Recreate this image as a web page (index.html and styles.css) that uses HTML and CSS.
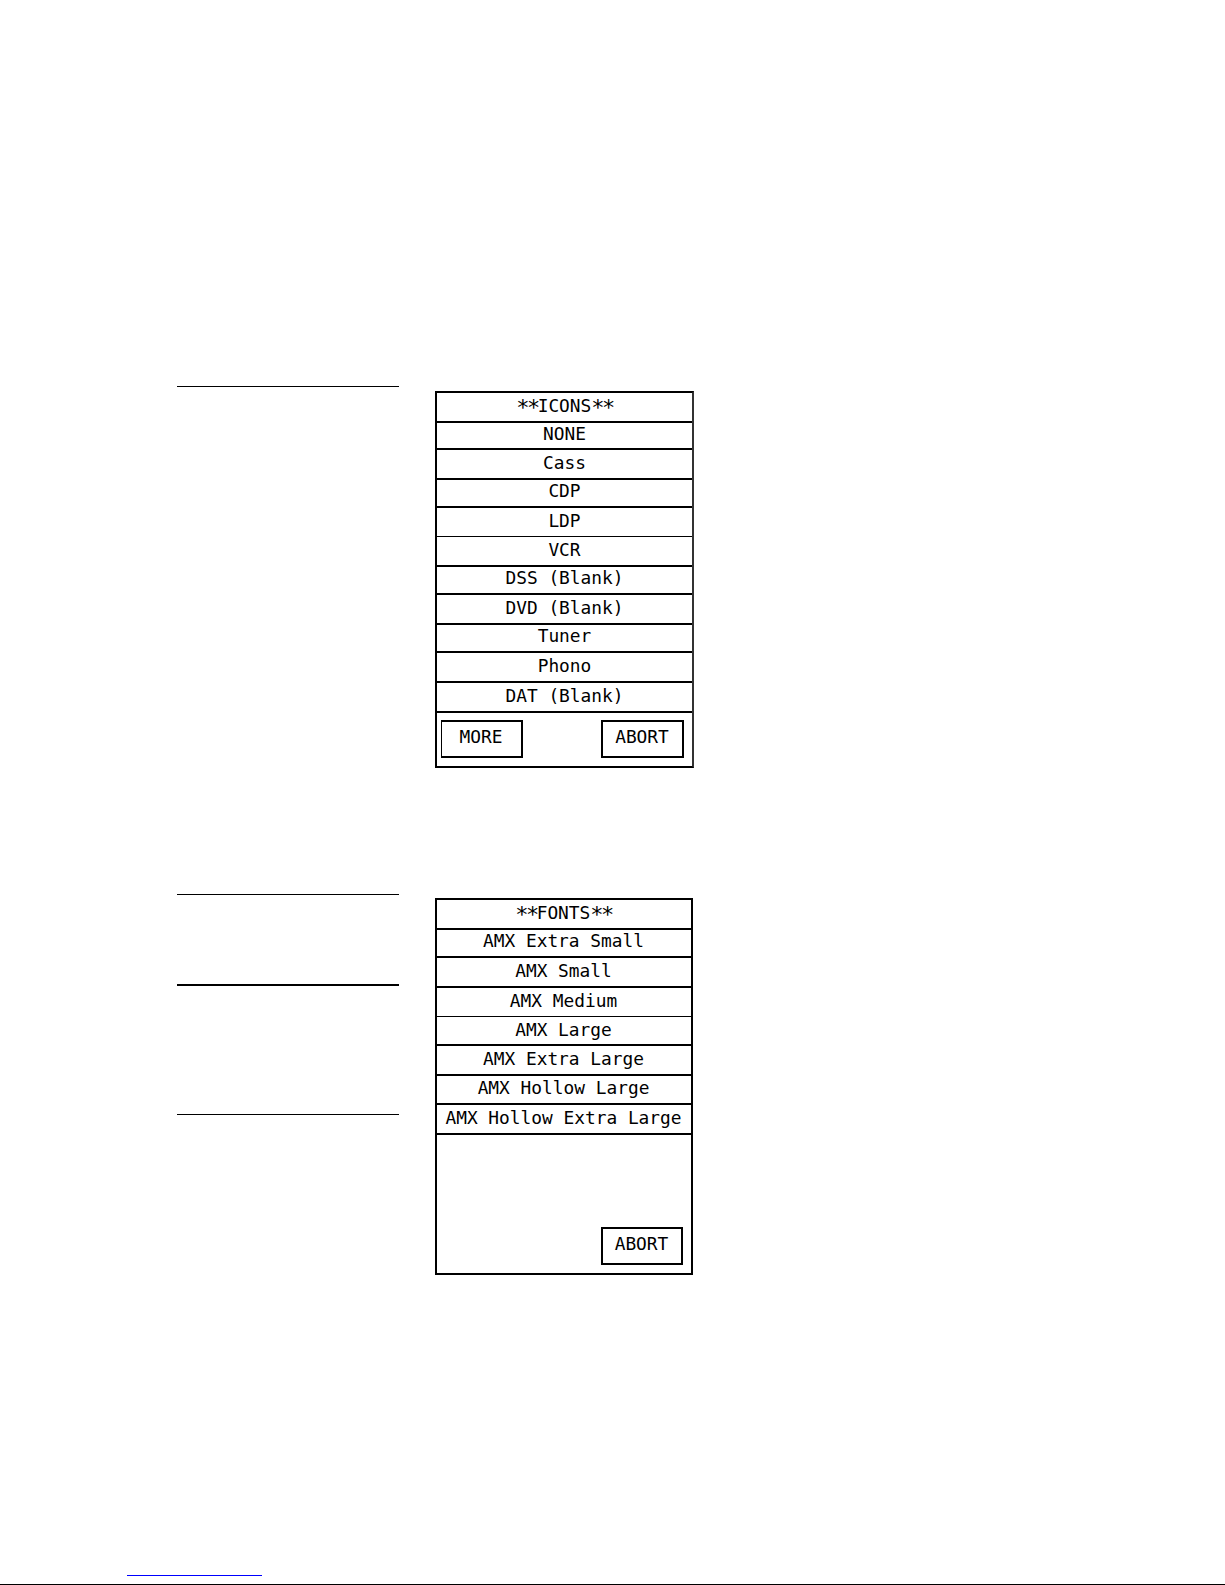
FILE: index.html
```
<!DOCTYPE html>
<html lang="en">
<head>
    <meta charset="UTF-8">
    <meta name="viewport" content="width=device-width, initial-scale=1.0">
    <title>Icons and Fonts</title>
    <link rel="stylesheet" href="styles.css">
</head>
<body>
    <main class="page">
        <!-- Icons menu -->
        <section class="entry icons-entry">
            <div class="rules">
                <hr class="rule">
            </div>
            <div class="panel icons-panel">
                <div class="row title"><span class="star">**</span>ICONS<span class="star">**</span></div>
                <div class="row narrow">NONE</div>
                <div class="row">Cass</div>
                <div class="row short">CDP</div>
                <div class="row thin">LDP</div>
                <div class="row">VCR</div>
                <div class="row short">DSS (Blank)</div>
                <div class="row">DVD (Blank)</div>
                <div class="row short">Tuner</div>
                <div class="row">Phono</div>
                <div class="row">DAT (Blank)</div>
                <div class="actions">
                    <button class="more">MORE</button>
                    <button>ABORT</button>
                </div>
            </div>
        </section>

        <!-- Fonts menu -->
        <section class="entry fonts-entry">
            <div class="rules">
                <hr class="rule">
                <hr class="rule thick">
                <hr class="rule last">
            </div>
            <div class="panel fonts-panel">
                <div class="row title"><span class="star">**</span>FONTS<span class="star">**</span></div>
                <div class="row short">AMX Extra Small</div>
                <div class="row">AMX Small</div>
                <div class="row thin">AMX Medium</div>
                <div class="row medium">AMX Large</div>
                <div class="row">AMX Extra Large</div>
                <div class="row hollow">AMX Hollow Large</div>
                <div class="row">AMX Hollow Extra Large</div>
                <div class="actions">
                    <button>ABORT</button>
                </div>
            </div>
        </section>

        <footer class="footer">
            <div class="footer-link"></div>
        </footer>
    </main>
</body>
</html>
```
FILE: styles.css
```
* {
    box-sizing: border-box;
}

body {
    margin: 0;
    background-color: #fff;
    color: #000;
    font-family: "DejaVu Sans Mono", monospace;
    font-size: 17.83px;
}

.page {
    display: flex;
    flex-direction: column;
    height: 1585px;
    padding-top: 386px;
    border-bottom: 1px solid #000;
}

.entry {
    display: flex;
    gap: 36px;
    padding-left: 177px;
}

.fonts-entry {
    margin-top: 126px;
}

.rules {
    width: 222px;
}

.rule {
    height: 1px;
    margin: 0;
    border: none;
    background-color: #000;
}

.rule.thick {
    height: 2px;
    margin-top: 89px;
}

.rule.last {
    margin-top: 128px;
}

.panel {
    display: flex;
    flex-direction: column;
    border: 2px solid #000;
}

.icons-panel {
    width: 259px;
    height: 377px;
    margin-top: 5px;
    border-right-color: #333;
}

.fonts-panel {
    width: 258px;
    height: 377px;
    margin-top: 4px;
}

.row {
    flex: none;
    height: 30px;
    border-bottom: 2px solid #000;
    line-height: 25px;
    text-align: center;
    white-space: pre;
}

.fonts-panel .row {
    padding-right: 1px;
}

.row.narrow {
    height: 27px;
    line-height: 21px;
}

.row.short {
    height: 28px;
    line-height: 21px;
}

.row.thin {
    height: 29px;
    border-bottom-width: 1px;
}

.row.medium {
    height: 29px;
}

.row.hollow {
    height: 29px;
    line-height: 23px;
}

.star {
    position: relative;
    top: 3px;
    font-size: 22px;
    line-height: 0;
    letter-spacing: -2.5px;
}

.actions {
    display: flex;
    flex: 1;
    justify-content: space-between;
    align-items: flex-end;
    padding: 0 8px 8px 4px;
}

.fonts-panel .actions {
    justify-content: flex-end;
}

button {
    width: 83px;
    height: 38px;
    padding: 0 1px 5px 0;
    border: 2px solid #000;
    border-radius: 0;
    background-color: #fff;
    color: #000;
    font: inherit;
}

button.more {
    width: 82px;
    border-left-width: 1px;
}

.fonts-panel button {
    width: 82px;
}

.footer {
    margin-top: auto;
    padding: 0 0 8px 127px;
}

.footer-link {
    width: 135px;
    height: 1px;
    background-color: #00f;
}
```
